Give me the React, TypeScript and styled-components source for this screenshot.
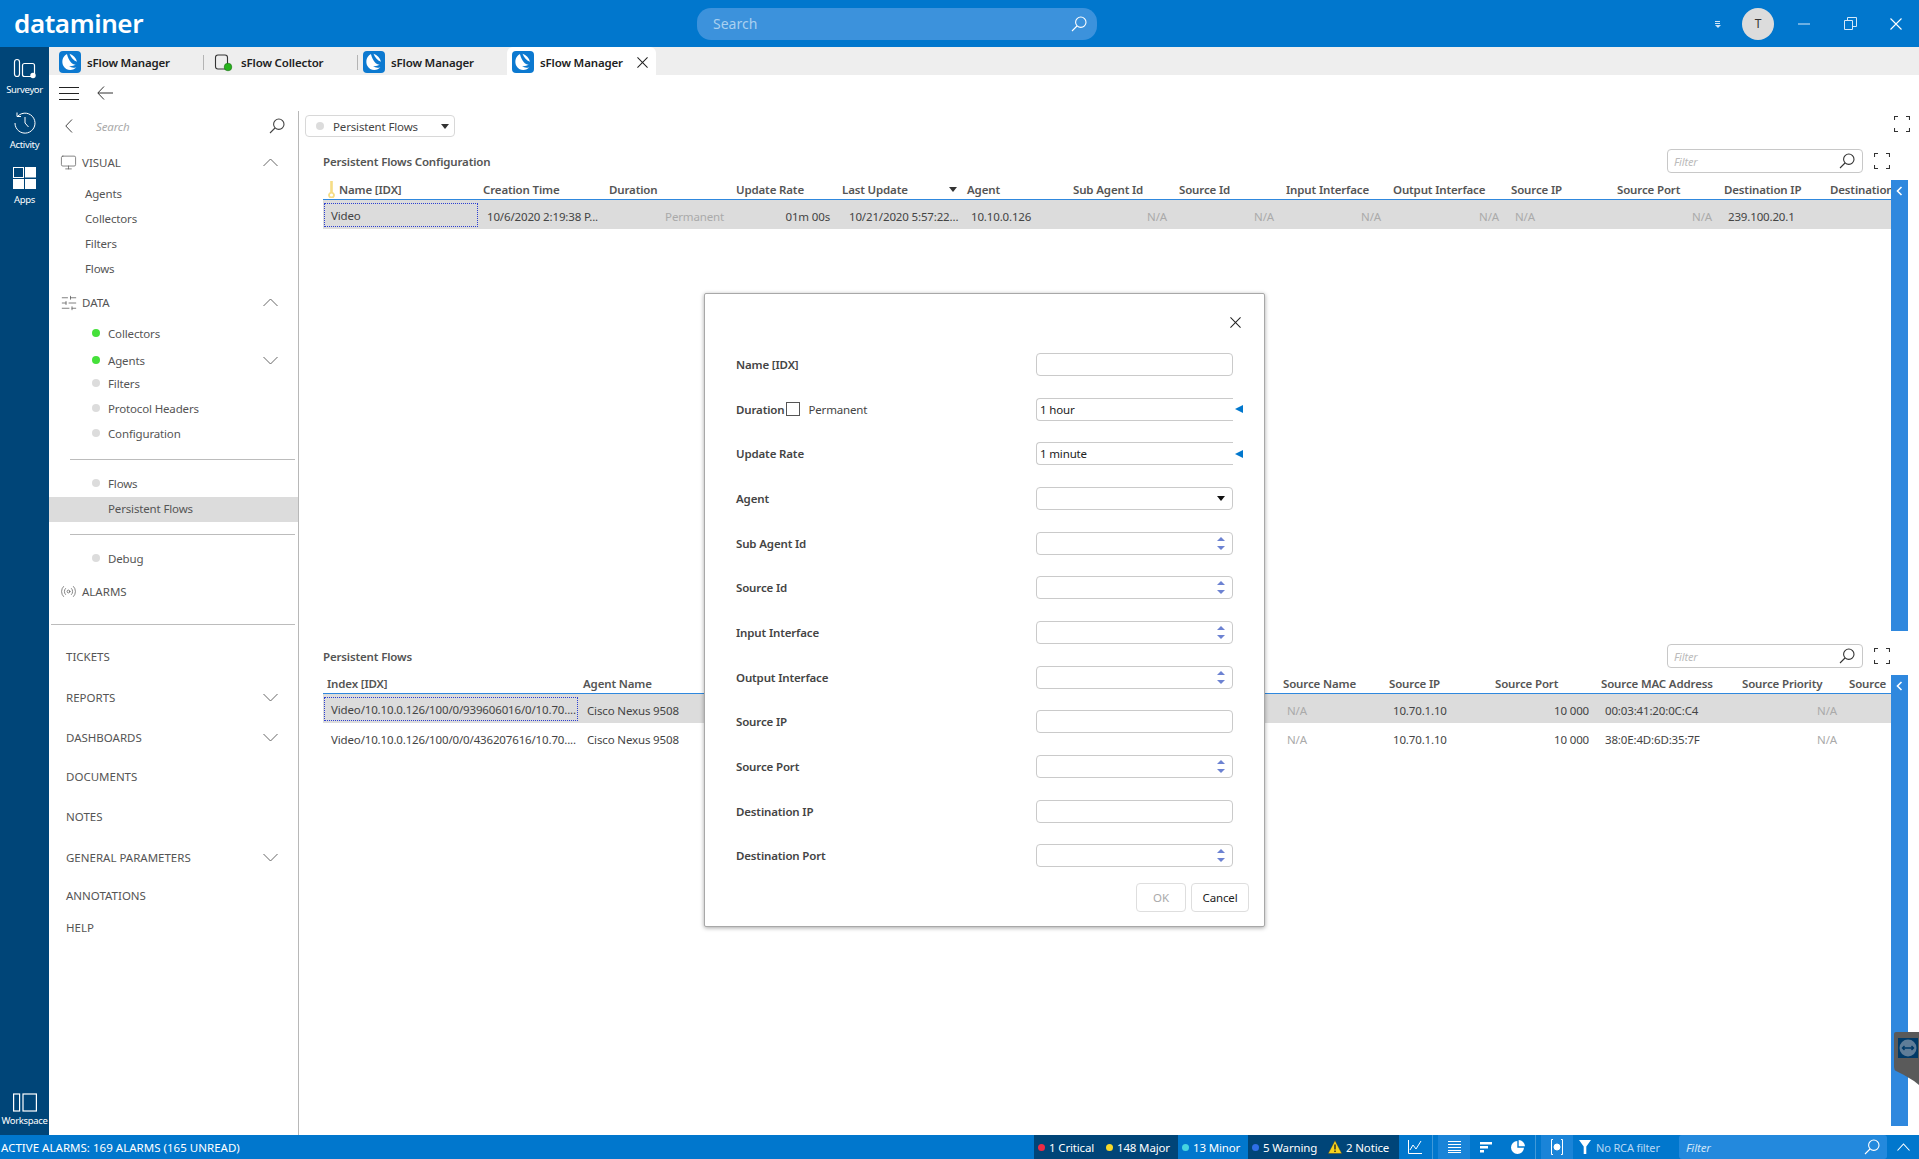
import { FC } from "react";
import styled, { createGlobalStyle } from "styled-components";
import { Monitor, Radio, SlidersHorizontal } from "lucide-react";

const GlobalStyle = createGlobalStyle`
  html, body, #root {
    margin: 0;
    height: 100%;
  }
  body {
    font-family: "Noto Sans", "Open Sans", sans-serif;
    font-size: 11.5px;
    letter-spacing: -0.15px;
    color: #444;
    background: #fff;
    overflow: hidden;
  }
  * {
    box-sizing: border-box;
  }
`;

const Page = styled.div`
  position: relative;
  display: flex;
  flex-direction: column;
  width: 1919px;
  height: 1159px;
  overflow: hidden;
`;

/* top bar */
const TopBar = styled.header`
  display: grid;
  grid-template-columns: 697px 400px 1fr;
  align-items: center;
  height: 47px;
  background: #0177cd;
  color: #fff;
  flex: none;
`;
const Logo = styled.div`
  padding: 0 0 2px 14px;
  font-size: 26px;
  font-weight: 600;
  letter-spacing: -0.4px;
  line-height: 32px;
`;
const GlobalSearch = styled.div`
  display: flex;
  align-items: center;
  justify-content: space-between;
  height: 32px;
  padding: 0 10px 0 16px;
  border-radius: 14px;
  background: #3c92dc;
  color: #a9d0f0;
  font-size: 14px;
  letter-spacing: 0;
  svg {
    color: #fff;
  }
`;
const WindowControls = styled.div`
  display: flex;
  align-items: center;
  justify-content: flex-end;
  padding-right: 17px;
`;
const WindowButton = styled.span<{ $ml: number }>`
  display: flex;
  margin-left: ${(p) => p.$ml}px;
`;
const Avatar = styled.span`
  display: flex;
  align-items: center;
  justify-content: center;
  width: 32px;
  height: 32px;
  margin-left: 20px;
  border-radius: 50%;
  background: #dcdcdc;
  color: #333;
  font-size: 12px;
`;

/* middle */
const Middle = styled.div`
  display: flex;
  flex: 1;
  min-height: 0;
`;
const Rail = styled.nav`
  display: flex;
  flex-direction: column;
  gap: 16px;
  width: 49px;
  flex: none;
  padding-top: 10px;
  background: #004578;
  color: #fff;
`;
const RailItem = styled.div`
  display: flex;
  flex-direction: column;
  align-items: center;
  gap: 4px;
  font-size: 9.5px;
  line-height: 13px;
  letter-spacing: -0.35px;
  svg {
    height: 22px;
  }
`;
const WorkspaceItem = styled(RailItem)`
  gap: 1px;
  margin-top: auto;
  padding-bottom: 8px;
  svg {
    height: 20px;
  }
`;
const Main = styled.div`
  display: flex;
  flex-direction: column;
  flex: 1;
  min-width: 0;
`;

/* tabs */
const TabBar = styled.div`
  display: flex;
  height: 28px;
  flex: none;
  background: #eeeeee;
`;
const Tab = styled.div<{ $w: number; $pad: number; $active?: boolean; $sep?: boolean }>`
  position: relative;
  display: flex;
  align-items: center;
  gap: 6px;
  width: ${(p) => p.$w}px;
  padding: 2px 0 0 ${(p) => p.$pad}px;
  background: ${(p) => (p.$active ? "#fff" : "transparent")};
  border-radius: ${(p) => (p.$active ? "6px 6px 0 0" : "0")};
  color: #222;
  font-weight: 600;
  white-space: nowrap;
  &::after {
    content: "";
    display: ${(p) => (p.$sep ? "block" : "none")};
    position: absolute;
    right: 0;
    top: 8px;
    height: 15px;
    border-right: 1px solid #b4b4b4;
  }
`;
const TabClose = styled.span`
  display: flex;
  margin-left: 8px;
  color: #222;
`;
const Toolbar = styled.div`
  display: flex;
  align-items: center;
  gap: 18px;
  height: 36px;
  flex: none;
  padding-left: 10px;
  color: #333;
`;
const Workspace = styled.div`
  display: flex;
  flex: 1;
  min-height: 0;
`;

/* sidebar */
const Sidebar = styled.aside`
  display: flex;
  flex-direction: column;
  width: 250px;
  flex: none;
  border-right: 1px solid #b8b8b8;
  color: #555;
`;
const SideSearch = styled.div`
  display: flex;
  align-items: center;
  height: 30px;
  padding: 0 13px 0 16px;
  color: #444;
`;
const SearchHint = styled.span`
  flex: 1;
  margin-left: 23px;
  color: #aaa;
  font-style: italic;
`;
const NavRow = styled.div<{
  $h: number;
  $mt?: number;
  $indent: number;
  $active?: boolean;
}>`
  display: flex;
  align-items: center;
  height: ${(p) => p.$h}px;
  margin-top: ${(p) => p.$mt ?? 0}px;
  padding: 0 20px 0 ${(p) => p.$indent}px;
  background: ${(p) => (p.$active ? "#dcdcdc" : "transparent")};
  white-space: nowrap;
`;
const SubRow = styled(NavRow)`
  padding-bottom: 2px;
`;
const UpperRow = styled(NavRow)`
  letter-spacing: 0;
`;
const NavIcon = styled.span`
  display: flex;
  width: 21px;
  margin-left: -1px;
  margin-right: 1px;
  color: #555;
`;
const NavLabel = styled.span`
  flex: 1;
`;
const Dot = styled.i<{ $color: string }>`
  width: 8px;
  height: 8px;
  margin-right: 8px;
  border-radius: 50%;
  background: ${(p) => p.$color};
`;
const NavRule = styled.hr<{ $mt: number; $ml: number }>`
  height: 1px;
  margin: ${(p) => p.$mt}px 3px 0 ${(p) => p.$ml}px;
  border: 0;
  background: #bcbcbc;
`;
const NavSpacer = styled.div`
  height: 13px;
  flex: none;
`;

/* content */
const Content = styled.section`
  display: flex;
  flex-direction: column;
  gap: 9px;
  flex: 1;
  min-width: 0;
  padding: 0 11px 9px 6px;
`;
const PageBar = styled.div`
  display: flex;
  align-items: flex-start;
  justify-content: space-between;
  height: 25px;
  padding-top: 4px;
  margin-bottom: -9px;
  color: #333;
  flex: none;
  box-sizing: content-box;
  padding-bottom: 5px;
  > svg {
    margin: 1px -2px 0 0;
  }
`;
const PageSelect = styled.div`
  display: flex;
  align-items: center;
  width: 150px;
  height: 22px;
  padding: 0 5px 0 10px;
  border: 1px solid #d8d8d8;
  border-radius: 4px;
  color: #444;
`;
const PageSelectLabel = styled.span`
  flex: 1;
  margin-left: 1px;
`;
const Panel = styled.div`
  display: flex;
  flex-direction: column;
  flex: 1;
  min-height: 0;
  padding-left: 18px;
`;
const PanelTitleRow = styled.div`
  display: flex;
  align-items: flex-start;
  height: 30px;
  padding: 4px 18px 0 0;
  flex: none;
`;
const PanelTitle = styled.div`
  flex: 1;
  line-height: 26px;
  font-weight: 600;
  color: #555;
`;
const FilterBox = styled.div`
  display: flex;
  align-items: center;
  justify-content: space-between;
  width: 196px;
  height: 24px;
  padding: 0 7px 0 6px;
  border: 1px solid #c8c8c8;
  border-radius: 4px;
  color: #bbb;
  font-style: italic;
  font-size: 11px;
  svg {
    color: #333;
  }
`;
const FocusIcon = styled.span`
  display: flex;
  margin: 4px 0 0 11px;
  color: #333;
`;
const PanelBody = styled.div`
  display: flex;
  flex: 1;
  min-height: 0;
`;
const Table = styled.div`
  flex: 1;
  min-width: 0;
  overflow: hidden;
`;
const SideStrip = styled.div`
  display: flex;
  align-items: flex-start;
  justify-content: center;
  width: 17px;
  margin-top: 5px;
  flex: none;
  padding-top: 6px;
  background: #2f88de;
  color: #fff;
`;
const HeaderRow = styled.div<{ $cols: string; $h: number }>`
  display: grid;
  grid-template-columns: ${(p) => p.$cols};
  align-items: end;
  height: ${(p) => p.$h}px;
  border-bottom: 1px solid #2f88de;
  font-weight: 600;
  color: #555;
`;
const HeadCell = styled.div<{ $pl?: number }>`
  display: flex;
  align-items: center;
  justify-content: space-between;
  height: 22px;
  padding: 2px 6px 0 ${(p) => p.$pl ?? 4}px;
  white-space: nowrap;
  overflow: hidden;
`;
const KeyMark = styled.span`
  display: flex;
  margin-left: -11px;
  margin-right: 3px;
`;
const HeadGroup = styled.span`
  display: flex;
  align-items: center;
`;
const DataRow = styled.div<{ $cols: string; $selected?: boolean }>`
  display: grid;
  grid-template-columns: ${(p) => p.$cols};
  height: 29px;
  background: ${(p) => (p.$selected ? "#dcdcdc" : "transparent")};
  color: #444;
`;
const DataCell = styled.div<{ $right?: boolean; $muted?: boolean; $pl?: number }>`
  display: flex;
  align-items: center;
  justify-content: ${(p) => (p.$right ? "flex-end" : "flex-start")};
  padding: 3px 8px 0 ${(p) => p.$pl ?? 8}px;
  color: ${(p) => (p.$muted ? "#aaa" : "inherit")};
  white-space: nowrap;
  overflow: hidden;
`;
const FocusedCell = styled(DataCell)`
  margin: 3px 1px 2px;
  padding: 0 6px;
  border: 1px dotted #2d3fd0;
`;

/* dialog */
const Dialog = styled.div`
  position: absolute;
  left: 704px;
  top: 293px;
  display: flex;
  flex-direction: column;
  width: 561px;
  height: 634px;
  border: 1px solid #a8a8a8;
  border-radius: 2px;
  background: #fff;
  box-shadow: 0 1px 4px rgba(0, 0, 0, 0.35);
`;
const DialogHead = styled.div`
  display: flex;
  justify-content: flex-end;
  height: 48px;
  flex: none;
  padding: 23px 23px 0 0;
  color: #222;
`;
const FormRow = styled.div`
  display: grid;
  grid-template-columns: 300px 197px 1fr;
  align-items: center;
  height: 44.7px;
  flex: none;
  padding-left: 31px;
`;
const FieldLabel = styled.div`
  display: flex;
  align-items: center;
  font-weight: 600;
  color: #444;
`;
const Check = styled.span`
  width: 14px;
  height: 14px;
  margin: 0 8px 0 2px;
  border: 1px solid #555;
`;
const CheckText = styled.span`
  font-weight: 400;
`;
const Field = styled.div<{ $open?: boolean }>`
  display: flex;
  align-items: center;
  justify-content: space-between;
  height: 23px;
  padding: 0 7px 0 3px;
  border: 1px solid #cacaca;
  border-right-width: ${(p) => (p.$open ? 0 : 1)}px;
  border-radius: ${(p) => (p.$open ? "4px 0 0 4px" : "4px")};
  color: #222;
`;
const BlueMarker = styled.span`
  display: flex;
  margin-left: 2px;
`;
const Spinner = styled.span`
  display: flex;
  flex-direction: column;
  gap: 5px;
  margin-left: auto;
`;
const DialogFoot = styled.div`
  display: flex;
  justify-content: flex-end;
  gap: 5px;
  margin-top: 5px;
  padding-right: 15px;
`;
const DialogButton = styled.button<{ $w: number }>`
  width: ${(p) => p.$w}px;
  height: 29px;
  padding: 0;
  border: 1px solid #dedede;
  border-radius: 4px;
  background: #fff;
  font: inherit;
  letter-spacing: inherit;
  color: ${(p) => (p.disabled ? "#aaa" : "#222")};
`;

/* status bar */
const StatusBar = styled.footer`
  display: flex;
  align-items: stretch;
  justify-content: space-between;
  height: 24px;
  flex: none;
  background: #0177cd;
  color: #fff;
  white-space: nowrap;
`;
const StatusText = styled.div`
  display: flex;
  align-items: center;
  padding-left: 1px;
  letter-spacing: 0.02px;
`;
const StatusGroup = styled.div`
  display: flex;
  align-items: stretch;
`;
const AlarmChip = styled.div<{ $w: number; $dark?: boolean }>`
  display: flex;
  align-items: center;
  gap: 4px;
  width: ${(p) => p.$w}px;
  padding-left: 4px;
  background: ${(p) => (p.$dark ? "#004578" : "transparent")};
`;
const AlarmDot = styled.i<{ $color: string }>`
  width: 7px;
  height: 7px;
  border-radius: 50%;
  background: ${(p) => p.$color};
`;
const StatusCell = styled.div<{ $w: number; $lit?: boolean; $rule?: boolean }>`
  display: flex;
  align-items: center;
  justify-content: center;
  width: ${(p) => p.$w}px;
  background: ${(p) => (p.$lit ? "#1a84d8" : "transparent")};
  margin-left: ${(p) => (p.$rule ? 5 : 0)}px;
`;
const StatusRule = styled.span`
  width: 1px;
  margin-left: 1px;
  background: rgba(255, 255, 255, 0.25);
`;
const RcaFilter = styled.div`
  display: flex;
  align-items: center;
  gap: 5px;
  width: 106px;
  padding-left: 6px;
  color: #b8d8f4;
  font-size: 11px;
`;
const StatusFilter = styled.div`
  display: flex;
  align-items: center;
  justify-content: space-between;
  width: 208px;
  padding: 0 7px;
  background: #2389dd;
  border-radius: 3px;
  color: #cfe4f7;
  font-style: italic;
  svg {
    color: #fff;
  }
`;
const RemoteWidget = styled.div`
  position: absolute;
  right: 0;
  top: 1032px;
  display: flex;
`;

/* icons */
const SearchGlyph: FC<{ size?: number }> = ({ size = 16 }) => (
  <svg width={size} height={size} viewBox="0 0 16 16" fill="none" stroke="currentColor" strokeWidth="1.1">
    <circle cx="9.8" cy="6.2" r="5.2" />
    <path d="M6 10 1 15" />
  </svg>
);
const Chevron: FC<{ up?: boolean }> = ({ up }) => (
  <svg width="15" height="9" viewBox="0 0 15 9" fill="none" stroke="#666" strokeWidth="1">
    <path d={up ? "M.5 8 7.5 1l7 7" : "M.5 1l7 7 7-7"} />
  </svg>
);
const Cross: FC<{ size: number }> = ({ size }) => (
  <svg width={size} height={size} viewBox="0 0 12 12" fill="none" stroke="currentColor" strokeWidth="1.1">
    <path d="M.5.5l11 11M11.5.5l-11 11" />
  </svg>
);
const Focus = () => (
  <svg width="16" height="16" viewBox="0 0 16 16" fill="none" stroke="currentColor" strokeWidth="1.1">
    <path d="M.5 4V.5H4M12 .5h3.500V4M15.500 12v3.500H12M4 15.500H.5V12" />
  </svg>
);
const Caret: FC<{ color?: string }> = ({ color = "#333" }) => (
  <svg width="8" height="5" viewBox="0 0 8 5" fill={color}>
    <path d="M0 0h8L4 5z" />
  </svg>
);
const SpinArrows = () => (
  <Spinner>
    <svg width="8" height="4" viewBox="0 0 8 4" fill="#6c82d2">
      <path d="M4 0 8 4H0z" />
    </svg>
    <svg width="8" height="4" viewBox="0 0 8 4" fill="#6c82d2">
      <path d="M0 0h8L4 4z" />
    </svg>
  </Spinner>
);
const BlueTriangle = () => (
  <BlueMarker>
    <svg width="8" height="8" viewBox="0 0 8 8" fill="#0177cd">
      <path d="M8 0v8L0 4z" />
    </svg>
  </BlueMarker>
);
const FlowIcon = () => (
  <svg width="22" height="22" viewBox="0 0 22 22">
    <rect width="22" height="22" rx="4" fill="#0c79d0" />
    <path
      fill="#fff"
      d="M7.500 3.200C3.600 5.400 2.300 10.500 4.300 14.800c1.900 3.900 6.700 5.300 10.500 3.500 1-.5 1.900-1.200 2.600-2-2.700 1-5.500.5-7.100-1.200 1.900.3 4.200-.1 6.400-1.300-3.700-.6-6.800-3.400-8.700-10.600zM10.500 2.800c1.300 3.700 3.800 6.600 7.500 8-1-3.800-3.700-6.800-7.500-8z"
    />
  </svg>
);
const CollectorIcon = () => (
  <svg width="22" height="22" viewBox="0 0 22 22">
    <rect x="2.500" y="4" width="12" height="14" rx="2.500" fill="none" stroke="#333" strokeWidth="1.1" />
    <circle cx="15" cy="16" r="3.800" fill="#27b31c" stroke="#1b6f14" strokeWidth=".6" />
  </svg>
);
const KeyIcon = () => (
  <svg width="9" height="17" viewBox="0 0 9 17">
    <path d="M3.200 0h2.600v11a3.400 3.400 0 1 1-2.600 0z" fill="#f6dd85" />
    <circle cx="4.500" cy="14" r="1.600" fill="#fff" />
  </svg>
);
const AlarmTriangle = () => (
  <svg width="14" height="14" viewBox="0 0 14 14">
    <path d="M7 .5 13.800 13.500H.2z" fill="#f7d21b" stroke="#333" strokeWidth=".4" />
    <path d="M6.300 4.500h1.400v5H6.300zM6.300 10.500h1.400V12H6.300z" fill="#222" />
  </svg>
);

const CONFIG_COLS = "156px 126px 127px 106px 125px 106px 106px 107px 107px 118px 106px 107px 106px 120px";
const FLOW_COLS = "256px 700px 106px 106px 106px 141px 107px 46px";

const CONFIG_HEAD = ["Creation Time", "Duration", "Update Rate"];
const CONFIG_HEAD_END = [
  "Agent",
  "Sub Agent Id",
  "Source Id",
  "Input Interface",
  "Output Interface",
  "Source IP",
  "Source Port",
  "Destination IP",
  "Destination",
];
const FLOW_HEAD = [
  "Index [IDX]",
  "Agent Name",
  "Source Name",
  "Source IP",
  "Source Port",
  "Source MAC Address",
  "Source Priority",
  "Source",
];
const FLOW_ROWS = [
  { id: "Video/10.10.0.126/100/0/939606016/0/10.70....", mac: "00:03:41:20:0C:C4" },
  { id: "Video/10.10.0.126/100/0/0/436207616/10.70....", mac: "38:0E:4D:6D:35:7F" },
];
const FORM_ROWS: { label: string; kind: "text" | "select" | "spin" }[] = [
  { label: "Agent", kind: "select" },
  { label: "Sub Agent Id", kind: "spin" },
  { label: "Source Id", kind: "spin" },
  { label: "Input Interface", kind: "spin" },
  { label: "Output Interface", kind: "spin" },
  { label: "Source IP", kind: "text" },
  { label: "Source Port", kind: "spin" },
  { label: "Destination IP", kind: "text" },
  { label: "Destination Port", kind: "spin" },
];
const UPPER_ROWS: { label: string; h: number; more?: boolean }[] = [
  { label: "TICKETS", h: 36 },
  { label: "REPORTS", h: 46, more: true },
  { label: "DASHBOARDS", h: 34, more: true },
  { label: "DOCUMENTS", h: 44 },
  { label: "NOTES", h: 36 },
  { label: "GENERAL PARAMETERS", h: 46, more: true },
  { label: "ANNOTATIONS", h: 30 },
  { label: "HELP", h: 34 },
];

const TopRight = () => (
  <WindowControls>
    <WindowButton $ml={0}>
      <svg width="8" height="8" viewBox="0 0 8 8" fill="none" stroke="#cfe4f7">
        <path d="M1 1.500h5M1 3.500h5" />
        <path d="M1 5h6L4 8z" fill="#cfe4f7" stroke="none" />
      </svg>
    </WindowButton>
    <Avatar>T</Avatar>
    <WindowButton $ml={24}>
      <svg width="12" height="2" viewBox="0 0 12 2" stroke="#d7e9f8">
        <path d="M0 1h12" />
      </svg>
    </WindowButton>
    <WindowButton $ml={34}>
      <svg width="13" height="13" viewBox="0 0 13 13" fill="none" stroke="#d7e9f8">
        <path d="M.5 3.500h8v9h-8zM3.500 3.500v-3h9v9h-4" />
      </svg>
    </WindowButton>
    <WindowButton $ml={33}>
      <Cross size={12} />
    </WindowButton>
  </WindowControls>
);

const PanelHead: FC<{ title: string }> = ({ title }) => (
  <PanelTitleRow>
    <PanelTitle>{title}</PanelTitle>
    <FilterBox>
      Filter
      <SearchGlyph />
    </FilterBox>
    <FocusIcon>
      <Focus />
    </FocusIcon>
  </PanelTitleRow>
);

const Strip = () => (
  <SideStrip>
    <svg width="7" height="10" viewBox="0 0 7 10" fill="none" stroke="#fff" strokeWidth="1.6">
      <path d="M5.500 1 1.500 5l4 4" />
    </svg>
  </SideStrip>
);

const App: FC = () => (
  <Page>
    <GlobalStyle />
    <TopBar>
      <Logo>dataminer</Logo>
      <GlobalSearch>
        Search
        <SearchGlyph />
      </GlobalSearch>
      <TopRight />
    </TopBar>
    <Middle>
      <Rail>
        <RailItem>
          <svg width="26" height="22" viewBox="0 0 26 22" fill="none" stroke="#fff" strokeWidth="1.2">
            <rect x="2.500" y="2.500" width="5" height="17" rx="2.500" />
            <rect x="10.500" y="6.500" width="12" height="13" rx="2" />
            <circle cx="21" cy="18.500" r="2.700" fill="#fff" stroke="none" />
          </svg>
          Surveyor
        </RailItem>
        <RailItem>
          <svg width="22" height="22" viewBox="0 0 22 22" fill="none" stroke="#fff" strokeWidth="1">
            <path d="M4 4A10 10 0 1 1 1 11" />
            <path d="M3 .5v4h4" />
            <path d="M11 5v6l3.500 4" />
          </svg>
          Activity
        </RailItem>
        <RailItem>
          <svg width="23" height="22" viewBox="0 0 23 22" fill="#fff">
            <rect x=".5" y=".5" width="10" height="10" fill="none" stroke="#fff" />
            <rect x="12" y="0" width="11" height="10.500" />
            <rect x="0" y="12" width="11" height="10" />
            <rect x="12" y="12" width="11" height="10" />
          </svg>
          Apps
        </RailItem>
        <WorkspaceItem>
          <svg width="24" height="20" viewBox="0 0 24 20" fill="none" stroke="#fff" strokeWidth="1.2">
            <rect x=".6" y="1" width="6" height="17" />
            <rect x="10" y="1" width="13.400" height="17" />
          </svg>
          Workspace
        </WorkspaceItem>
      </Rail>
      <Main>
        <TabBar>
          <Tab $w={155} $pad={10} $sep>
            <FlowIcon />
            sFlow Manager
          </Tab>
          <Tab $w={154} $pad={9} $sep>
            <CollectorIcon />
            sFlow Collector
          </Tab>
          <Tab $w={149} $pad={5}>
            <FlowIcon />
            sFlow Manager
          </Tab>
          <Tab $w={149} $pad={5} $active>
            <FlowIcon />
            sFlow Manager
            <TabClose>
              <Cross size={11} />
            </TabClose>
          </Tab>
        </TabBar>
        <Toolbar>
          <svg width="20" height="13" viewBox="0 0 20 13" stroke="#222">
            <path d="M0 .5h20M0 6.500h20M0 12.500h20" />
          </svg>
          <svg width="16" height="14" viewBox="0 0 16 14" fill="none" stroke="#333">
            <path d="M7 .5.800 7 7 13.500M1 7h15" />
          </svg>
        </Toolbar>
        <Workspace>
          <Sidebar>
            <SideSearch>
              <svg width="8" height="14" viewBox="0 0 8 14" fill="none" stroke="#444">
                <path d="M7 .5.800 7 7 13.500" />
              </svg>
              <SearchHint>Search</SearchHint>
              <SearchGlyph />
            </SideSearch>
            <UpperRow $h={39} $mt={2} $indent={12}>
              <NavIcon>
                <Monitor size={17} strokeWidth={1} />
              </NavIcon>
              <NavLabel>VISUAL</NavLabel>
              <Chevron up />
            </UpperRow>
            <SubRow $h={25} $indent={36}>Agents</SubRow>
            <SubRow $h={25} $indent={36}>Collectors</SubRow>
            <SubRow $h={25} $indent={36}>Filters</SubRow>
            <SubRow $h={25} $indent={36}>Flows</SubRow>
            <UpperRow $h={41} $indent={12}>
              <NavIcon>
                <SlidersHorizontal size={18} strokeWidth={1} />
              </NavIcon>
              <NavLabel>DATA</NavLabel>
              <Chevron up />
            </UpperRow>
            <SubRow $h={22} $indent={43}>
              <Dot $color="#45e03a" />
              Collectors
            </SubRow>
            <SubRow $h={22} $mt={5} $indent={43}>
              <Dot $color="#45e03a" />
              <NavLabel>Agents</NavLabel>
              <Chevron />
            </SubRow>
            <SubRow $h={22} $mt={1} $indent={43}>
              <Dot $color="#dcdcdc" />
              Filters
            </SubRow>
            <SubRow $h={22} $mt={3} $indent={43}>
              <Dot $color="#dcdcdc" />
              Protocol Headers
            </SubRow>
            <SubRow $h={22} $mt={3} $indent={43}>
              <Dot $color="#dcdcdc" />
              Configuration
            </SubRow>
            <NavRule $mt={14} $ml={21} />
            <SubRow $h={22} $mt={13} $indent={43}>
              <Dot $color="#dcdcdc" />
              Flows
            </SubRow>
            <SubRow $h={25} $mt={2} $indent={59} $active>Persistent Flows</SubRow>
            <NavRule $mt={12} $ml={21} />
            <SubRow $h={22} $mt={13} $indent={43}>
              <Dot $color="#dcdcdc" />
              Debug
            </SubRow>
            <UpperRow $h={22} $mt={10} $indent={12}>
              <NavIcon>
                <Radio size={17} strokeWidth={1} />
              </NavIcon>
              ALARMS
            </UpperRow>
            <NavRule $mt={22} $ml={2} />
            <NavSpacer />
            {UPPER_ROWS.map((row) => (
              <UpperRow key={row.label} $h={row.h} $indent={17}>
                <NavLabel>{row.label}</NavLabel>
                {row.more && <Chevron />}
              </UpperRow>
            ))}
          </Sidebar>
          <Content>
            <PageBar>
              <PageSelect>
                <Dot $color="#dcdcdc" />
                <PageSelectLabel>Persistent Flows</PageSelectLabel>
                <Caret />
              </PageSelect>
              <Focus />
            </PageBar>
            <Panel>
              <PanelHead title="Persistent Flows Configuration" />
              <PanelBody>
                <Table>
                  <HeaderRow $cols={CONFIG_COLS} $h={25}>
                    <HeadCell $pl={15}>
                      <HeadGroup>
                        <KeyMark>
                          <KeyIcon />
                        </KeyMark>
                        Name [IDX]
                      </HeadGroup>
                    </HeadCell>
                    {CONFIG_HEAD.map((title) => (
                      <HeadCell key={title}>{title}</HeadCell>
                    ))}
                    <HeadCell>
                      Last Update
                      <Caret />
                    </HeadCell>
                    {CONFIG_HEAD_END.map((title) => (
                      <HeadCell key={title}>{title}</HeadCell>
                    ))}
                  </HeaderRow>
                  <DataRow $cols={CONFIG_COLS} $selected>
                    <FocusedCell>Video</FocusedCell>
                    <DataCell>10/6/2020 2:19:38 P...</DataCell>
                    <DataCell $right $muted>Permanent</DataCell>
                    <DataCell $right>01m 00s</DataCell>
                    <DataCell $pl={11}>10/21/2020 5:57:22...</DataCell>
                    <DataCell>10.10.0.126</DataCell>
                    <DataCell $right $muted>N/A</DataCell>
                    <DataCell $right $muted>N/A</DataCell>
                    <DataCell $right $muted>N/A</DataCell>
                    <DataCell $right $muted>N/A</DataCell>
                    <DataCell $muted>N/A</DataCell>
                    <DataCell $right $muted>N/A</DataCell>
                    <DataCell>239.100.20.1</DataCell>
                    <DataCell />
                  </DataRow>
                </Table>
                <Strip />
              </PanelBody>
            </Panel>
            <Panel>
              <PanelHead title="Persistent Flows" />
              <PanelBody>
                <Table>
                  <HeaderRow $cols={FLOW_COLS} $h={24}>
                    {FLOW_HEAD.map((title) => (
                      <HeadCell key={title}>{title}</HeadCell>
                    ))}
                  </HeaderRow>
                  {FLOW_ROWS.map((row, i) => {
                    const IdCell = i === 0 ? FocusedCell : DataCell;
                    return (
                      <DataRow key={row.id} $cols={FLOW_COLS} $selected={i === 0}>
                        <IdCell>{row.id}</IdCell>
                        <DataCell>Cisco Nexus 9508</DataCell>
                        <DataCell $muted>N/A</DataCell>
                        <DataCell>10.70.1.10</DataCell>
                        <DataCell $right>10 000</DataCell>
                        <DataCell>{row.mac}</DataCell>
                        <DataCell $right $muted>N/A</DataCell>
                        <DataCell />
                      </DataRow>
                    );
                  })}
                </Table>
                <Strip />
              </PanelBody>
            </Panel>
          </Content>
        </Workspace>
      </Main>
    </Middle>
    <StatusBar>
      <StatusText>ACTIVE ALARMS: 169 ALARMS (165 UNREAD)</StatusText>
      <StatusGroup>
        <AlarmChip $w={68} $dark>
          <AlarmDot $color="#ee2b45" />1 Critical
        </AlarmChip>
        <AlarmChip $w={76} $dark>
          <AlarmDot $color="#f6d92b" />148 Major
        </AlarmChip>
        <AlarmChip $w={70}>
          <AlarmDot $color="#45d4e0" />13 Minor
        </AlarmChip>
        <AlarmChip $w={76} $dark>
          <AlarmDot $color="#2f6fe8" />5 Warning
        </AlarmChip>
        <AlarmChip $w={75} $dark>
          <AlarmTriangle />2 Notice
        </AlarmChip>
        <StatusCell $w={32}>
          <svg width="14" height="14" viewBox="0 0 14 14" fill="none" stroke="#fff">
            <path d="M.5 0v13.500H14M2 10l3-5 3 4 5-8" />
          </svg>
        </StatusCell>
        <StatusRule />
        <StatusCell $w={32} $lit $rule>
          <svg width="13" height="12" viewBox="0 0 13 12" stroke="#fff">
            <path d="M0 .5h13M0 3.500h13M0 6.500h13M0 9.500h13M0 11.500h13" />
          </svg>
        </StatusCell>
        <StatusCell $w={32}>
          <svg width="12" height="11" viewBox="0 0 12 11" fill="#fff">
            <path d="M0 0h12v2.500H0zM0 4h8v2.500H0zM0 8h4v2.500H0z" />
          </svg>
        </StatusCell>
        <StatusCell $w={32}>
          <svg width="14" height="14" viewBox="0 0 14 14" fill="#fff">
            <path d="M6.300 1A6.500 6.500 0 1 0 13 7.700H6.300zM7.700 0v6.300H14A6.500 6.500 0 0 0 7.700 0z" />
          </svg>
        </StatusCell>
        <StatusRule />
        <StatusCell $w={32} $lit $rule>
          <svg width="14" height="16" viewBox="0 0 14 16" fill="none" stroke="#fff">
            <path d="M3 .5H1.500v15H3M11 .5h1.500v15H11" />
            <circle cx="7" cy="8" r="3" fill="#fff" />
          </svg>
        </StatusCell>
        <RcaFilter>
          <svg width="12" height="14" viewBox="0 0 12 14" fill="#fff">
            <path d="M0 0h12L7.300 6.500V14H4.700V6.500z" />
          </svg>
          No RCA filter
        </RcaFilter>
        <StatusFilter>
          Filter
          <SearchGlyph />
        </StatusFilter>
        <StatusCell $w={32}>
          <svg width="13" height="8" viewBox="0 0 13 8" fill="none" stroke="#fff" strokeWidth="1.1">
            <path d="M.5 7.500l6-6.500 6 6.500" />
          </svg>
        </StatusCell>
      </StatusGroup>
    </StatusBar>
    <Dialog>
      <DialogHead>
        <Cross size={11} />
      </DialogHead>
      <FormRow>
        <FieldLabel>Name [IDX]</FieldLabel>
        <Field />
      </FormRow>
      <FormRow>
        <FieldLabel>
          Duration
          <Check />
          <CheckText>Permanent</CheckText>
        </FieldLabel>
        <Field $open>1 hour</Field>
        <BlueTriangle />
      </FormRow>
      <FormRow>
        <FieldLabel>Update Rate</FieldLabel>
        <Field $open>1 minute</Field>
        <BlueTriangle />
      </FormRow>
      {FORM_ROWS.map((row) => (
        <FormRow key={row.label}>
          <FieldLabel>{row.label}</FieldLabel>
          <Field>
            {row.kind === "select" && <span />}
            {row.kind === "select" && <Caret color="#111" />}
            {row.kind === "spin" && <SpinArrows />}
          </Field>
        </FormRow>
      ))}
      <DialogFoot>
        <DialogButton $w={50} disabled>OK</DialogButton>
        <DialogButton $w={58}>Cancel</DialogButton>
      </DialogFoot>
    </Dialog>
    <RemoteWidget>
      <svg width="25" height="53" viewBox="0 0 25 53">
        <path d="M2 0H25V53L20 49 10 43 2 39Q0 38 0 35V2Q0 0 2 0Z" fill="#5a5a5a" />
        <rect x="4" y="6" width="20" height="20" fill="#003a68" />
        <circle cx="14" cy="16" r="8.500" fill="#5f7d98" />
        <path d="M8.500 16h11M10.500 14l-2 2 2 2M17.500 14l2 2-2 2" fill="none" stroke="#003a68" strokeWidth="1.4" />
      </svg>
    </RemoteWidget>
  </Page>
);

export default App;
